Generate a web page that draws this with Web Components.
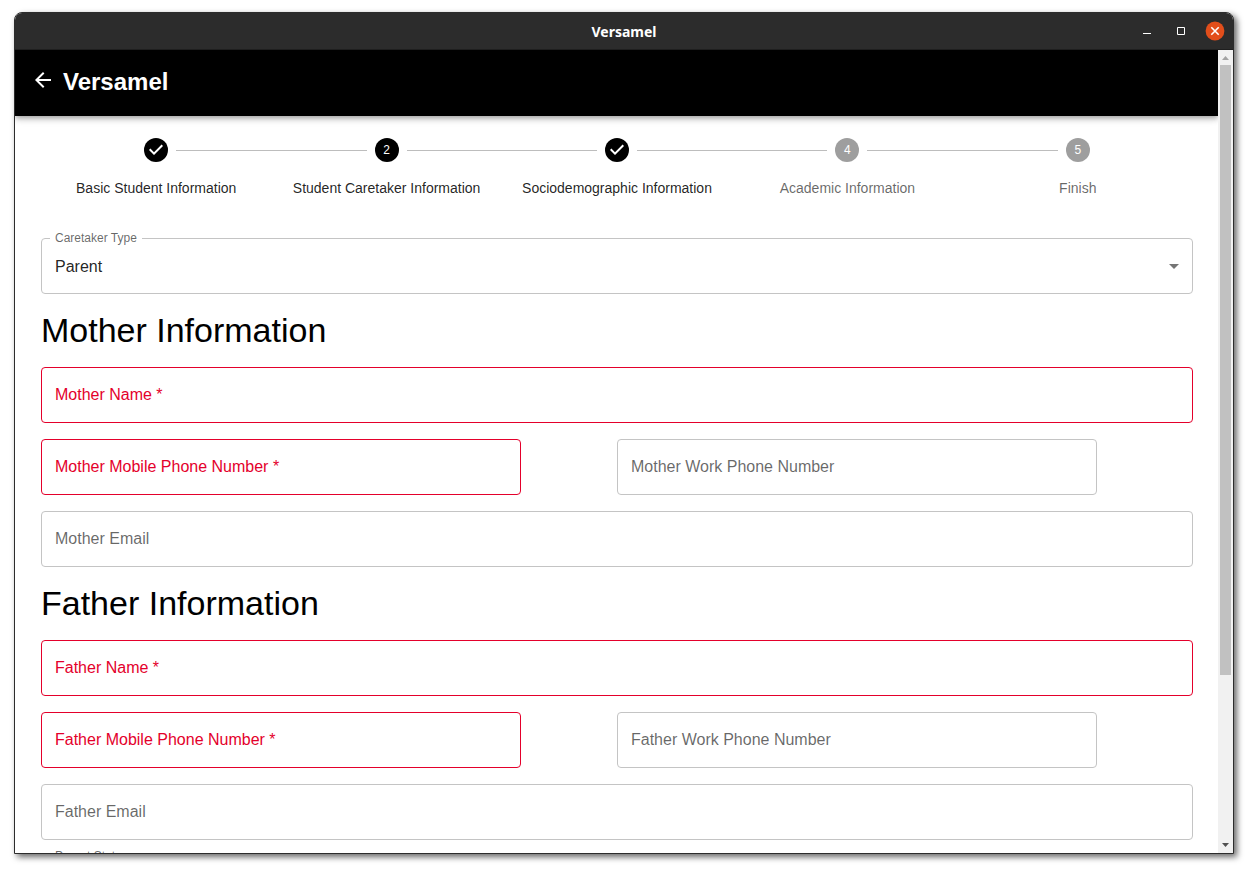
<!DOCTYPE html>
<html lang="en">
<head>
<meta charset="utf-8">
<title>Versamel</title>
<style>
  html, body { height: 100%; }
  body {
    margin: 0;
    box-sizing: border-box;
    padding: 12px 18px 18px 14px;
    background: #fff;
    color: #000;
    font-family: "Liberation Sans", Arial, sans-serif;
    font-size: 16px;
  }
</style>
</head>
<body>
<desktop-window caption="Versamel">
  <app-bar>Versamel</app-bar>
  <step-list>
    <step-item number="1" state="done">Basic Student Information</step-item>
    <step-item number="2" state="active">Student Caretaker Information</step-item>
    <step-item number="3" state="done">Sociodemographic Information</step-item>
    <step-item number="4">Academic Information</step-item>
    <step-item number="5">Finish</step-item>
  </step-list>
  <form-grid>
    <select-field label="Caretaker Type" options="Parent,Guardian"></select-field>
    <section-title>Mother Information</section-title>
    <text-field label="Mother Name" required></text-field>
    <text-field label="Mother Mobile Phone Number" type="tel" half required></text-field>
    <text-field label="Mother Work Phone Number" type="tel" half></text-field>
    <text-field label="Mother Email" type="email"></text-field>
    <section-title>Father Information</section-title>
    <text-field label="Father Name" required></text-field>
    <text-field label="Father Mobile Phone Number" type="tel" half required></text-field>
    <text-field label="Father Work Phone Number" type="tel" half></text-field>
    <text-field label="Father Email" type="email"></text-field>
    <select-field label="Parent Status" options="Married,Divorced"></select-field>
  </form-grid>
</desktop-window>

<script>
  function define(name, render, setup) {
    customElements.define(name, class extends HTMLElement {
      connectedCallback() {
        if (this.shadowRoot) return;
        this.attachShadow({ mode: "open" }).innerHTML = render(this);
        if (setup) setup(this, this.shadowRoot);
      }
    });
  }

  define("desktop-window", el => `
    <style>
      :host {
        display: flex; flex-direction: column; box-sizing: border-box; height: 100%;
        border: 1px solid #2c2c2c; border-radius: 8px 8px 0 0; overflow: hidden;
        box-shadow: 3px 3px 6px rgba(0,0,0,.6); background: #fff;
      }
      header {
        flex: none; height: 36px; display: grid; grid-template-columns: 1fr auto 1fr;
        align-items: center; background: #2c2c2c; color: #fff; border-bottom: 1px solid #1f1f1f;
      }
      h1 { grid-column: 2; margin: 0; padding-top: 1px; font: bold 14px/20px "Noto Sans", sans-serif; }
      window-controls { justify-self: end; }
      .body { flex: 1; min-height: 0; display: flex; }
      main { flex: 1; min-width: 0; overflow: hidden; }
    </style>
    <header><h1>${el.getAttribute("caption")}</h1><window-controls></window-controls></header>
    <div class="body"><main><slot></slot></main><scroll-track></scroll-track></div>`);

  define("window-controls", () => `
    <style>
      :host { display: flex; gap: 14px; padding-right: 8px; }
      button { border: 0; margin: 0; padding: 0; width: 20px; height: 20px; background: none; }
      svg { display: block; }
    </style>
    <button aria-label="Minimize"><svg width="20" height="20"><path fill="#fff" d="M6 12h8v1H6z"/></svg></button>
    <button aria-label="Maximize"><svg width="20" height="20"><path fill="none" stroke="#fff" d="M6.500 6.500h7v7h-7z"/></svg></button>
    <button aria-label="Close"><svg width="20" height="20"><circle cx="10" cy="10" r="9.400" fill="#e24e1b"/><path stroke="#fff" stroke-width="1.600" d="M6.300 6.300l7.400 7.400M13.700 6.300l-7.400 7.400"/></svg></button>`);

  define("scroll-track", () => `
    <style>
      :host { flex: none; display: flex; flex-direction: column; width: 15px; background: #f1f1f1; }
      svg { flex: none; display: block; }
      .thumb { flex: 610; margin: 0 2px; background: #c1c1c1; }
      .rest { flex: 163; }
    </style>
    <svg width="15" height="15"><path fill="#a3a3a3" d="M4 10l3.500-4 3.500 4z"/></svg>
    <div class="thumb"></div><div class="rest"></div>
    <svg width="15" height="15"><path fill="#505050" d="M4 5h7l-3.500 4z"/></svg>`);

  define("app-bar", () => `
    <style>
      :host {
        display: flex; align-items: center; gap: 8px; box-sizing: border-box; position: relative;
        height: 66px; padding: 0 16px 6px; background: #000; color: #fff;
        box-shadow: 0 2px 4px -1px rgba(0,0,0,.2), 0 4px 5px rgba(0,0,0,.14), 0 1px 10px rgba(0,0,0,.12);
      }
      button { border: 0; margin: 0; padding: 0; background: none; }
      svg { display: block; }
      h2 { margin: 0; padding-top: 4px; font-size: 24px; line-height: 32px; }
    </style>
    <button aria-label="Back"><svg width="24" height="24" fill="#fff"><path d="M20 11H7.830l5.590-5.590L12 4l-8 8 8 8 1.410-1.410L7.830 13H20v-2z"/></svg></button>
    <h2><slot></slot></h2>`);

  define("step-list", () => `
    <style>
      :host { display: grid; grid-template-columns: repeat(5, minmax(0, 1fr)); padding: 22px 25px 40px 26px; }
    </style>
    <slot></slot>`);

  define("step-item", el => {
    const n = el.getAttribute("number");
    const done = el.getAttribute("state") === "done";
    return `
    <style>
      :host { display: flex; flex-direction: column; gap: 16px; color: rgba(0,0,0,.6); --dot: #9e9e9e; }
      :host([state]) { color: rgba(0,0,0,.87); --dot: #000; }
      .row { display: flex; align-items: center; gap: 8px; }
      .line { flex: 1; height: 1px; background: #bdbdbd; }
      :host(:first-child) .line:first-child, :host(:last-child) .line:last-child { background: none; }
      .dot {
        width: 24px; height: 24px; border-radius: 50%; background: var(--dot); color: #fff;
        font-size: 12px; line-height: 24px; text-align: center;
      }
      svg { display: block; }
      .name { font-size: 14px; line-height: 20px; text-align: center; }
    </style>
    <div class="row"><span class="line"></span><span class="dot">${done
      ? '<svg width="24" height="24" fill="#fff"><path d="M10 17l-5-5 1.400-1.400 3.600 3.600 7.600-7.600L19 8l-9 9z"/></svg>'
      : n}</span><span class="line"></span></div>
    <div class="name"><slot></slot></div>`;
  });

  define("form-grid", () => `
    <style>
      :host { display: grid; grid-template-columns: 5fr 1fr 5fr 1fr; row-gap: 16px; padding: 0 25px 24px 26px; }
      ::slotted(*) { grid-column: 1 / -1; }
      ::slotted([half]) { grid-column: auto / span 1; }
      ::slotted([half]:not([required])) { grid-column: 3; }
    </style>
    <slot></slot>`);

  define("section-title", () => `
    <style>
      :host { display: block; }
      h3 { margin: 0; font-weight: 400; font-size: 34px; line-height: 41px; }
    </style>
    <h3><slot></slot></h3>`);

  define("text-field", el => {
    const req = el.hasAttribute("required");
    return `
    <style>
      :host { display: grid; min-width: 0; --edge: #c4c4c4; --ink: rgba(0,0,0,.6); }
      :host([required]) { --edge: #e4002b; --ink: #e4002b; }
      label, input { grid-area: 1 / 1; box-sizing: border-box; }
      input {
        width: 100%; height: 56px; margin: 0; padding: 0 13px; border: 1px solid var(--edge);
        border-radius: 4px; background: #fff; font: inherit; outline: none;
      }
      label { z-index: 1; align-self: center; padding: 0 14px; line-height: 20px; color: var(--ink); pointer-events: none; }
      input:focus { border-color: #000; }
      :host([filled]) label { visibility: hidden; }
    </style>
    <label for="field">${el.getAttribute("label")}${req ? " *" : ""}</label>
    <input id="field" type="${el.getAttribute("type") || "text"}"${req ? " required" : ""}>`;
  }, (el, root) => {
    root.querySelector("input").addEventListener("input", e => el.toggleAttribute("filled", e.target.value !== ""));
  });

  define("select-field", el => `
    <style>
      :host { display: grid; position: relative; }
      select, svg { grid-area: 1 / 1; }
      select {
        appearance: none; width: 100%; height: 56px; margin: 0; padding: 0 32px 0 13px;
        border: 1px solid #c4c4c4; border-radius: 4px; background: #fff;
        font: inherit; color: rgba(0,0,0,.87); outline: none;
      }
      svg { z-index: 1; justify-self: end; align-self: center; margin-right: 7px; pointer-events: none; }
      label {
        position: absolute; top: -8px; left: 9px; padding: 0 5px; background: #fff;
        font-size: 12px; line-height: 16px; color: rgba(0,0,0,.6);
      }
    </style>
    <label for="choice">${el.getAttribute("label")}</label>
    <select id="choice">${el.getAttribute("options").split(",").map(o => `<option>${o}</option>`).join("")}</select>
    <svg width="24" height="24" fill="#757575"><path d="M7 10l5 5 5-5z"/></svg>`);
</script>
</body>
</html>
